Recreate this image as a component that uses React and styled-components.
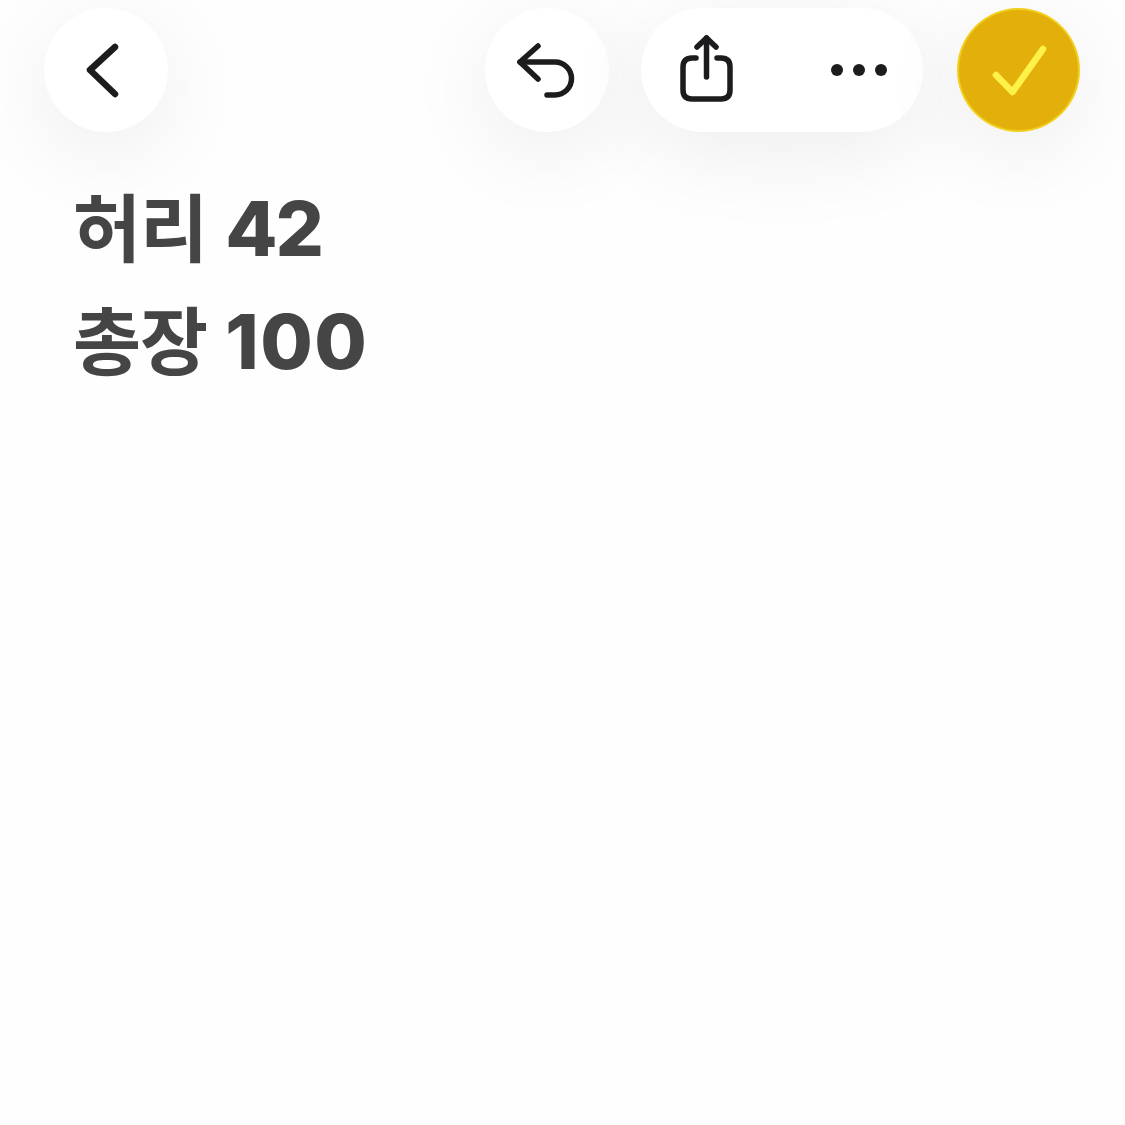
import React from "react";
import styled, { createGlobalStyle } from "styled-components";

const GlobalStyle = createGlobalStyle`
  html, body {
    margin: 0;
    padding: 0;
    background: #fff;
  }
`;

const Page = styled.div`
  width: 1125px;
  height: 1125px;
  overflow: hidden;
  background: #fefefe;
  font-family: Inter, "Noto Sans CJK KR", sans-serif;
`;

const Toolbar = styled.header`
  display: flex;
  align-items: flex-start;
  padding: 8px 45px 0 44px;
`;

const RightGroup = styled.div`
  display: flex;
  gap: 32px;
  margin-left: auto;
`;

const softShadow = "0 20px 90px rgba(0, 0, 0, 0.07)";

const RoundButton = styled.button`
  width: 124px;
  height: 124px;
  padding: 0;
  border: 0;
  border-radius: 50%;
  display: flex;
  align-items: center;
  justify-content: center;
  background: #fff;
  box-shadow: ${softShadow};
`;

const DoneButton = styled(RoundButton)`
  width: 123px;
  margin-left: 2px;
  background: #e3b00b;
  border: 2px solid #f1cf1c;
  box-sizing: border-box;
`;

const Pill = styled.div`
  width: 282px;
  height: 124px;
  border-radius: 62px;
  box-sizing: border-box;
  padding: 0 36px 0 39px;
  display: flex;
  align-items: center;
  justify-content: space-between;
  background: #fff;
  box-shadow: ${softShadow};
`;

const Note = styled.main`
  padding: 40px 0 0 73px;
  color: #454545;
  font-size: 76px;
  font-weight: 700;
  line-height: 112px;
`;

const Line = styled.div`
  display: flex;
  align-items: baseline;
  gap: 18px;
  white-space: nowrap;
`;

const Label = styled.span`
  font-size: 74px;
  letter-spacing: -1px;
`;

const Figure = styled.span`
  font-weight: 800;
  letter-spacing: ${(p) => p.$track}px;
`;

const Icon = styled.svg`
  display: block;
  fill: none;
  stroke: ${(p) => p.$stroke || "#1c1c1e"};
  stroke-width: ${(p) => p.$weight || 5.5}px;
  stroke-linecap: round;
  stroke-linejoin: round;
`;

const Dots = styled.svg`
  display: block;
  fill: #1c1c1e;
`;

export default function App() {
  return (
    <Page>
      <GlobalStyle />
      <Toolbar>
        <RoundButton aria-label="back">
          <Icon width="124" height="124" viewBox="0 0 124 124" $weight={6.5}>
            <path d="M71 39 L46 62 L71 86" />
          </Icon>
        </RoundButton>
        <RightGroup>
          <RoundButton aria-label="undo">
            <Icon width="124" height="124" viewBox="0 0 124 124">
              <path d="M53 38 L35 54 L53 71" />
              <path d="M35 54 H70 A16.5 16.5 0 0 1 70 87 H62" />
            </Icon>
          </RoundButton>
          <Pill>
            <Icon width="53" height="70" viewBox="0 0 53 70">
              <path d="M26.5 3 V42" />
              <path d="M17 12 L26.5 3 L36 12" />
              <path d="M16 23 H12 C6 23 3 26 3 32 V55 C3 61 6 64 12 64 H41 C47 64 50 61 50 55 V32 C50 26 47 23 41 23 H37" />
            </Icon>
            <Dots width="56" height="14" viewBox="0 0 56 14">
              <circle cx="6" cy="7" r="6" />
              <circle cx="28" cy="7" r="6" />
              <circle cx="50" cy="7" r="6" />
            </Dots>
          </Pill>
          <DoneButton aria-label="done">
            <Icon width="60" height="60" viewBox="0 0 60 60" $stroke="#fdf24a" $weight={6.5}>
              <path d="M7 35 L23.5 52 L54 9" />
            </Icon>
          </DoneButton>
        </RightGroup>
      </Toolbar>
      <Note>
        <Line>
          <Label>허리</Label>
          <Figure $track={-2}>42</Figure>
        </Line>
        <Line>
          <Label>총장</Label>
          <Figure $track={1.5}>100</Figure>
        </Line>
      </Note>
    </Page>
  );
}
